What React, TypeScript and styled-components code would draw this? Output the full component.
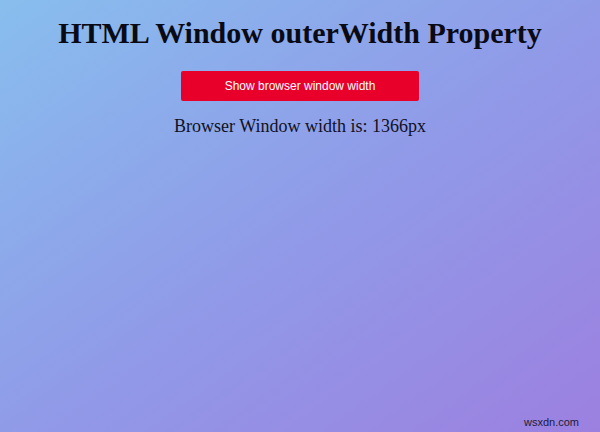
import styled, { createGlobalStyle } from 'styled-components';

const GlobalStyle = createGlobalStyle`
  html, body {
    margin: 0;
    padding: 0;
  }
`;

const App = () => {
  return (
    <>
      <GlobalStyle />
      <Page>
        <Title>HTML Window outerWidth Property</Title>
        <ShowButton>Show browser window width</ShowButton>
        <Result>Browser Window width is: 1366px</Result>
        <Footer>
          <Watermark>wsxdn.com</Watermark>
        </Footer>
      </Page>
    </>
  );
};

const Page = styled.div`
  box-sizing: border-box;
  width: 600px;
  height: 432px;
  display: flex;
  flex-direction: column;
  align-items: center;
  padding-top: 15px;
  font-family: 'Liberation Serif', 'Times New Roman', serif;
  background: linear-gradient(to bottom right, #88beee 0%, #909be8 50%, #9c80e0 100%);
`;

const Title = styled.h1`
  margin: 0;
  font-size: 30px;
  font-weight: bold;
  line-height: 36px;
  color: #0a0a14;
`;

const ShowButton = styled.button`
  margin-top: 20px;
  width: 238px;
  height: 30px;
  border: none;
  border-radius: 2px;
  background-color: #e8002b;
  color: #fff;
  font-family: 'Liberation Sans', Arial, sans-serif;
  font-size: 12px;
  cursor: pointer;
`;

const Result = styled.p`
  margin: 14px 0 0;
  font-size: 18px;
  line-height: 22px;
  color: #111122;
`;

const Footer = styled.div`
  margin-top: auto;
  align-self: stretch;
  display: flex;
  justify-content: flex-end;
  padding: 0 21px 4px 0;
`;

const Watermark = styled.span`
  font-family: 'Liberation Sans', Arial, sans-serif;
  font-size: 11px;
  color: #1c1c3a;
`;

export default App;
